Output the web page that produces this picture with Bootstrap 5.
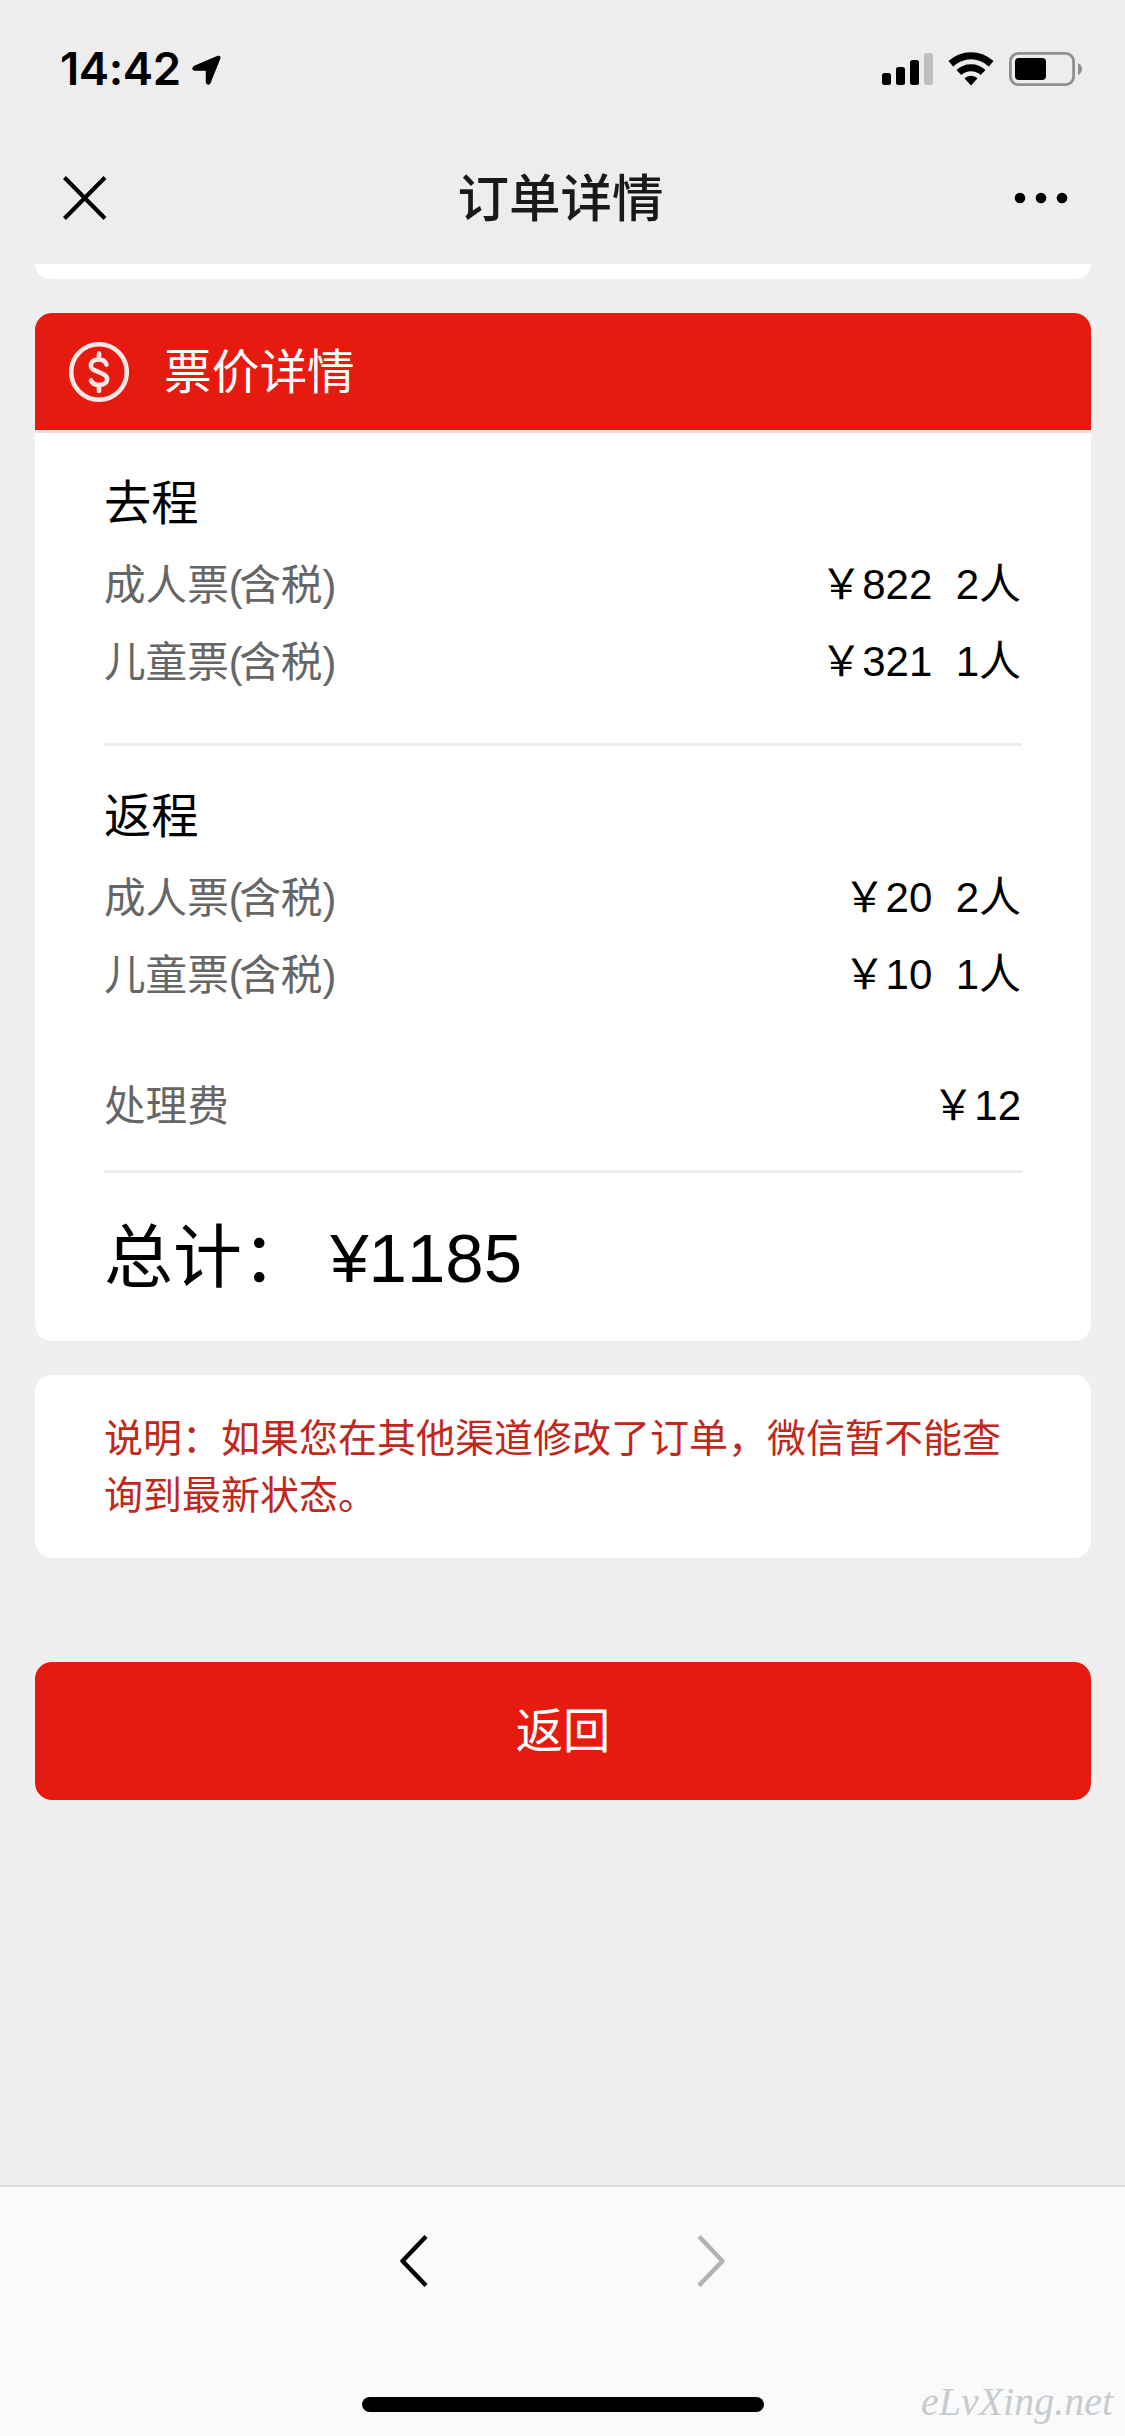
<!DOCTYPE html>
<html lang="zh-CN">
<head>
<meta charset="utf-8">
<meta name="viewport" content="width=device-width, initial-scale=1">
<title>订单详情</title>
<link href="https://cdn.jsdelivr.net/npm/bootstrap@5.3.0/dist/css/bootstrap.min.css" rel="stylesheet">
<style>
body{font-family:"Liberation Sans","Noto Sans CJK SC",sans-serif;font-kerning:none;background:#efefef;color:#000;width:1125px;height:2436px;overflow:hidden}
svg{display:block;flex:none}
.topbar{background:#ededed;height:264px}
.statusline{height:138px;padding:0 43px 0 60px}
.clock{font:600 45.5px/1 Inter,sans-serif;letter-spacing:-.4px}
.status-left{gap:11px}
.titleline{height:126px;padding:0 57px 6px 63px}
.page-title{font-size:51.5px;font-weight:500;color:#191919;line-height:60px;padding-top:2px}
.content-col{padding:0 34px 0 35px}
.prev-panel{height:15px;border-radius:0 0 17px 17px}
.gap-panel{margin-top:34px}
.panel{border-radius:17px;overflow:hidden}
.panel-head{background:#e71a0f;color:#fff;height:120px;border-bottom:3px solid #f3dcda;font-size:47.7px;padding-left:34px;gap:35px}
.panel-head span{padding-top:2px}
.panel-in{padding:0 69px}
.leg-title{font-size:47.3px;line-height:85px;padding-top:28px;font-weight:400;margin:0}
.fare{font-size:42px;line-height:77px}
.fare dt{font-weight:400;color:#666;font-size:41.6px;padding-top:1px;height:77px}
.paren{letter-spacing:-3.4px}
.fare dd{margin:0;padding-right:1px;white-space:pre}
.fee{margin-top:54px}
.rule{height:3px;background:#ececec}
.rule-legs{margin-top:43px}
.rule-total{margin-top:26px}
.total{font-size:69px;line-height:168px;height:168px;padding-top:2px;white-space:pre}
.notice{height:183px;padding:35px 69px 0;font-size:39px;line-height:57px;color:#c1271b}
.btn-return{height:138px;margin-top:104px;border-radius:17px;background:#e71a0f;color:#fff;font-size:47.3px;border:0;padding-top:8px}
.toolbar{background:#f9fafc;border-top:2px solid #d9d9d9;height:251px;position:relative}
.navs{padding:48px 400px 0}
.homebar{width:402px;height:15px;border-radius:8px;background:#000;position:absolute;left:362px;bottom:24px}
.sitemark{position:absolute;right:6px;bottom:4px}
</style>
</head>
<body class="d-flex flex-column">
<header class="topbar flex-shrink-0">
  <div class="statusline d-flex align-items-center justify-content-between">
    <div class="status-left d-flex align-items-center">
      <span class="clock">14:42</span>
      <svg width="30" height="31" viewBox="0 0 30 31"><path d="M2.500 12.500 26 2.500Q28.500 2 27.600 4.500L18 28.500q-2 3-3.500 0V16H2.500Q-.5 14.500 2.500 12.500Z" stroke="#000" stroke-width="1.500" stroke-linejoin="round"/></svg>
    </div>
    <svg width="200" height="34" viewBox="0 0 200 34">
      <rect y="21" width="9" height="12" rx="2.500"/><rect x="14" y="15" width="9" height="18" rx="2.500"/><rect x="28" y="8" width="9" height="25" rx="2.500"/><rect x="42" y="1" width="9" height="32" rx="2.500" fill="#bfbfbf"/>
      <path d="M66.500 9a33 33 0 0 1 45 0l-4.600 5.500a26 26 0 0 0-35.800 0ZM74.500 18a21.500 21.500 0 0 1 29 0l-4.800 5a14.500 14.500 0 0 0-19.400 0ZM82.400 26.300a9.800 9.800 0 0 1 13.200 0L89 33.500Z"/>
      <rect x="128.400" y="1.400" width="63.200" height="31.200" rx="8" fill="none" stroke="#8f8f8f" stroke-width="2.800"/><rect x="133" y="6" width="31" height="22" rx="4"/><path d="M196 11q4 2 4 6t-4 6Z" fill="#8f8f8f"/>
    </svg>
  </div>
  <div class="titleline d-flex align-items-center justify-content-between">
    <svg width="44" height="44" viewBox="0 0 44 44" stroke="#000" stroke-width="4.200"><path d="M1.500 1.500 42 42.500M42 1.500 1.500 42.500"/></svg>
    <h1 class="page-title m-0">订单详情</h1>
    <svg width="54" height="12" viewBox="0 0 54 12"><circle cx="6" cy="6" r="5.300"/><circle cx="27" cy="6" r="5.300"/><circle cx="48" cy="6" r="5.300"/></svg>
  </div>
</header>
<main class="content-col flex-grow-1">
  <div class="prev-panel bg-white"></div>
  <section class="panel gap-panel bg-white">
    <div class="panel-head d-flex align-items-center">
      <svg width="60" height="62" viewBox="0 0 60 62" fill="none" stroke="#fff" stroke-opacity=".9" stroke-linecap="round"><circle cx="30" cy="31" r="27.800" stroke-width="4.600"/><path d="M37.500 23.500q-2-5-7.500-5c-9.500 0-10.500 8.500-4 11l8 3.500c7 3.500 4.500 11-4 11q-6 0-8-4.500M30 12.500v6M30 44v6" stroke-width="4.600"/></svg>
      <span>票价详情</span>
    </div>
    <div class="panel-in">
      <h2 class="leg-title">去程</h2>
      <dl class="m-0">
        <div class="fare d-flex justify-content-between"><dt>成人票<span class="paren">(</span>含税<span class="paren">)</span></dt><dd>￥822  2人</dd></div>
        <div class="fare d-flex justify-content-between"><dt>儿童票<span class="paren">(</span>含税<span class="paren">)</span></dt><dd>￥321  1人</dd></div>
      </dl>
      <div class="rule rule-legs"></div>
      <h2 class="leg-title">返程</h2>
      <dl class="m-0">
        <div class="fare d-flex justify-content-between"><dt>成人票<span class="paren">(</span>含税<span class="paren">)</span></dt><dd>￥20  2人</dd></div>
        <div class="fare d-flex justify-content-between"><dt>儿童票<span class="paren">(</span>含税<span class="paren">)</span></dt><dd>￥10  1人</dd></div>
        <div class="fare fee d-flex justify-content-between"><dt>处理费</dt><dd>￥12</dd></div>
      </dl>
      <div class="rule rule-total"></div>
      <div class="total">总计： ¥1185</div>
    </div>
  </section>
  <section class="panel gap-panel notice bg-white">说明：如果您在其他渠道修改了订单，微信暂不能查询到最新状态。</section>
  <button class="btn btn-return w-100" type="button">返回</button>
</main>
<footer class="toolbar flex-shrink-0">
  <div class="navs d-flex justify-content-between">
    <svg width="28" height="52" viewBox="0 0 28 52" fill="none" stroke="#000" stroke-width="4.400" stroke-linejoin="round"><path d="M26 1.500 2.500 26 26 50.500"/></svg>
    <svg width="28" height="52" viewBox="0 0 28 52" fill="none" stroke="#b2b2b2" stroke-width="4.400" stroke-linejoin="round"><path d="M2 1.500 25.500 26 2 50.500"/></svg>
  </div>
  <div class="homebar"></div>
  <svg class="sitemark" width="202" height="54" viewBox="0 0 202 54"><text x="4" y="37" textLength="192" lengthAdjust="spacingAndGlyphs" font-family="Liberation Serif, serif" font-style="italic" font-size="41" fill="#c9cacb">eLvXing.net</text></svg>
</footer>
<script src="https://cdn.jsdelivr.net/npm/bootstrap@5.3.0/dist/js/bootstrap.bundle.min.js"></script>
</body>
</html>
